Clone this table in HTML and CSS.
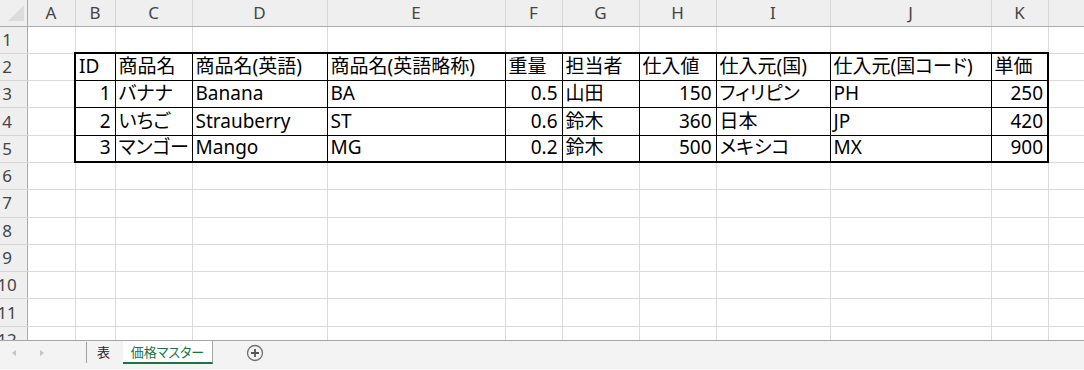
FILE: index.html
```html
<!DOCTYPE html>
<html>
<head>
<meta charset="utf-8">
<title>価格マスター</title>
<link rel="stylesheet" href="styles.css">
</head>
<body>
<div class="book">
  <div class="sheet">
    <table class="grid">
      <colgroup>
        <col style="width:27px"><col style="width:48px"><col style="width:40px"><col style="width:77px">
        <col style="width:135px"><col style="width:178px"><col style="width:57px"><col style="width:77px">
        <col style="width:77px"><col style="width:114px"><col style="width:161px"><col style="width:57px">
        <col style="width:36px">
      </colgroup>
      <thead>
        <tr>
          <th class="corner"><svg width="27" height="25" viewBox="0 0 27 25"><polygon points="24,5 24,21 8,21" fill="#dcdcdc"/></svg></th>
          <th>A</th><th>B</th><th>C</th><th>D</th><th>E</th><th>F</th>
          <th>G</th><th>H</th><th>I</th><th>J</th><th>K</th><th></th>
        </tr>
      </thead>
      <tbody>
        <tr><th class="rh"><span>1</span></th><td></td><td></td><td></td><td></td><td></td><td></td><td></td><td></td><td></td><td></td><td></td><td></td></tr>
      </tbody>
      <tbody class="data">
        <tr>
          <th class="rh"><span>2</span></th><td></td>
          <td class="d">ID</td><td class="d">商品名</td><td class="d">商品名(英語)</td><td class="d">商品名(英語略称)</td>
          <td class="d">重量</td><td class="d">担当者</td><td class="d">仕入値</td><td class="d">仕入元(国)</td>
          <td class="d">仕入元(国コード)</td><td class="d">単価</td><td></td>
        </tr>
        <tr>
          <th class="rh"><span>3</span></th><td></td>
          <td class="d num">1</td><td class="d">バナナ</td><td class="d">Banana</td><td class="d">BA</td>
          <td class="d num">0.5</td><td class="d">山田</td><td class="d num">150</td><td class="d">フィリピン</td>
          <td class="d">PH</td><td class="d num">250</td><td></td>
        </tr>
        <tr>
          <th class="rh"><span>4</span></th><td></td>
          <td class="d num">2</td><td class="d">いちご</td><td class="d">Strauberry</td><td class="d">ST</td>
          <td class="d num">0.6</td><td class="d">鈴木</td><td class="d num">360</td><td class="d">日本</td>
          <td class="d">JP</td><td class="d num">420</td><td></td>
        </tr>
        <tr>
          <th class="rh"><span>5</span></th><td></td>
          <td class="d num">3</td><td class="d">マンゴー</td><td class="d">Mango</td><td class="d">MG</td>
          <td class="d num">0.2</td><td class="d">鈴木</td><td class="d num">500</td><td class="d">メキシコ</td>
          <td class="d">MX</td><td class="d num">900</td><td></td>
        </tr>
      </tbody>
      <tbody>
        <tr><th class="rh"><span>6</span></th><td></td><td></td><td></td><td></td><td></td><td></td><td></td><td></td><td></td><td></td><td></td><td></td></tr>
        <tr><th class="rh"><span>7</span></th><td></td><td></td><td></td><td></td><td></td><td></td><td></td><td></td><td></td><td></td><td></td><td></td></tr>
        <tr><th class="rh"><span>8</span></th><td></td><td></td><td></td><td></td><td></td><td></td><td></td><td></td><td></td><td></td><td></td><td></td></tr>
        <tr><th class="rh"><span>9</span></th><td></td><td></td><td></td><td></td><td></td><td></td><td></td><td></td><td></td><td></td><td></td><td></td></tr>
        <tr><th class="rh"><span>10</span></th><td></td><td></td><td></td><td></td><td></td><td></td><td></td><td></td><td></td><td></td><td></td><td></td></tr>
        <tr><th class="rh"><span>11</span></th><td></td><td></td><td></td><td></td><td></td><td></td><td></td><td></td><td></td><td></td><td></td><td></td></tr>
        <tr><th class="rh"><span>12</span></th><td></td><td></td><td></td><td></td><td></td><td></td><td></td><td></td><td></td><td></td><td></td><td></td></tr>
      </tbody>
    </table>
  </div>

  <div class="tabbar">
    <div class="nav">
      <svg width="4" height="6" viewBox="0 0 4 6"><polygon points="4,0 4,6 0,3" fill="#c4c4c4"/></svg>
      <svg width="4" height="6" viewBox="0 0 4 6"><polygon points="0,0 0,6 4,3" fill="#c4c4c4"/></svg>
    </div>
    <div class="sep"></div>
    <div class="tab">表</div>
    <div class="tab active">価格マスター</div>
    <div class="add">
      <svg width="18" height="18" viewBox="0 0 18 18">
        <circle cx="9" cy="9" r="7.5" fill="none" stroke="#707070" stroke-width="1.3"/>
        <path d="M9 5v8M5 9h8" stroke="#555" stroke-width="1.8"/>
      </svg>
    </div>
  </div>
</div>
</body>
</html>
```

FILE: styles.css
```css
body {
  margin: 0;
  background: #fff;
  font-family: "Noto Sans", "Noto Sans CJK JP", sans-serif;
}
.book {
  width: 1084px;
  height: 370px;
  display: flex;
  flex-direction: column;
  overflow: hidden;
}
.sheet {
  height: 340px;
  overflow: hidden;
}

/* grid */
.grid {
  width: 1084px;
  table-layout: fixed;
  border-collapse: collapse;
  font-size: 19px;
  font-feature-settings: "palt";
  color: #000;
}
.grid thead tr {
  height: 26px;
}
.grid tbody tr {
  height: 27.3px;
}
.grid td {
  border: 1px solid #dadada;
  padding: 0 4px 4px 3px;
  line-height: 20px;
  vertical-align: bottom;
  white-space: nowrap;
  overflow: hidden;
}
.grid thead th {
  background: #efefef;
  border-right: 1px solid #d6d6d6;
  border-bottom: 1px solid #ababab;
  color: #444;
  font-weight: normal;
  font-size: 17px;
  line-height: 25px;
  padding: 0;
  text-align: center;
}
.grid thead th.corner {
  border-right: 1px solid #ababab;
  line-height: 0;
  vertical-align: top;
}
.grid .rh {
  background: #efefef;
  border-right: 1px solid #ababab;
  border-bottom: 1px solid #d6d6d6;
  color: #444;
  font-weight: normal;
  font-size: 17px;
  padding: 0;
  overflow: hidden;
  vertical-align: middle;
}
.grid .rh span {
  display: block;
  width: 20px;
  margin-left: -3px;
  text-align: center;
  line-height: 24px;
}

/* data block */
.grid td.d {
  border: 1px solid #000;
}
.grid td.num {
  text-align: right;
}
.data tr:first-child td.d {
  border-top: 2px solid #000;
}
.data tr:last-child td.d {
  border-bottom: 2px solid #000;
}
.data td:nth-child(3) {
  border-left: 2px solid #000;
}
.data td:nth-child(12) {
  border-right: 2px solid #000;
}

/* sheet tabs */
.tabbar {
  height: 28px;
  border-top: 1px solid #a6a6a6;
  border-bottom: 1px solid #fbfbfb;
  background: #f3f3f3;
  display: flex;
  align-items: flex-start;
  font-family: "Noto Sans CJK JP", sans-serif;
  font-feature-settings: "palt";
  font-size: 13px;
}
.nav {
  width: 86px;
  display: flex;
  align-items: center;
  gap: 24px;
  padding-left: 12px;
  height: 24px;
  box-sizing: border-box;
}
.sep {
  width: 1px;
  height: 21px;
  margin-top: 1px;
  background: #a0a0a0;
}
.tab {
  height: 21px;
  line-height: 21px;
  padding: 0 13px 0 10px;
  color: #262626;
  border-bottom: 2px solid transparent;
}
.tab.active {
  width: 90px;
  box-sizing: border-box;
  padding: 0;
  text-align: center;
  background: #fff;
  color: #217346;
  border-right: 1px solid #a6a6a6;
  border-bottom: 2px solid #217346;
  height: 23px;
}
.add {
  margin: 3px 0 0 33px;
  line-height: 0;
}
```
